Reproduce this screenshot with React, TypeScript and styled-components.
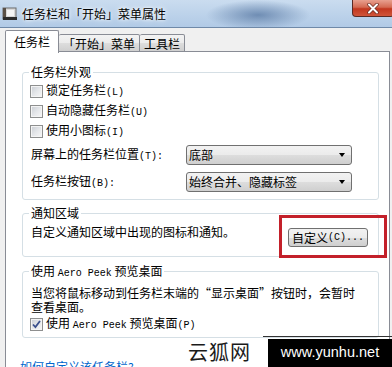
import styled, { createGlobalStyle } from 'styled-components';

const GlobalStyle = createGlobalStyle`
  html, body {
    margin: 0;
    padding: 0;
  }
  body {
    background: #f0f0f0;
    font-family: "Noto Sans CJK SC", "Noto Sans", sans-serif;
    font-size: 12px;
    color: #000;
    overflow: hidden;
  }
`;

const Window = styled.div`
  position: relative;
  width: 392px;
  height: 367px;
  overflow: hidden;
  display: flex;
  flex-direction: column;
  background: #f0f0f0;
`;

const TitleBar = styled.div`
  height: 27px;
  flex-shrink: 0;
  display: flex;
  align-items: center;
  padding-left: 2px;
  border-bottom: 1px solid #6f89a8;
  background:
    radial-gradient(ellipse 52px 15px at 258px 15px, rgba(92, 124, 166, 0.8), rgba(92, 124, 166, 0) 100%),
    linear-gradient(180deg, #cadcef 0%, #bcd2ea 55%, #b1cae6 100%);
`;

const TitleText = styled.span`
  margin-left: 4px;
  font-size: 12px;
  line-height: 14px;
  color: #000;
  text-shadow: 0 0 6px #fff, 0 0 3px #fff;
`;

const CloseButton = styled.div`
  margin-left: auto;
  align-self: flex-start;
  width: 42px;
  height: 17px;
  margin-right: -2px;
  display: flex;
  align-items: center;
  justify-content: center;
  border: 1px solid #5b2a24;
  border-top: none;
  border-radius: 0 0 4px 4px;
  background: linear-gradient(180deg, #e8a08f 0%, #d46a53 45%, #c2371f 55%, #d0553a 100%);
  box-sizing: border-box;
`;

const Body = styled.div`
  flex: 1;
  display: flex;
  flex-direction: column;
  padding: 2px 2px 0 5px;
  min-height: 0;
`;

const TabStrip = styled.div`
  display: flex;
  align-items: flex-end;
  height: 22px;
  position: relative;
  z-index: 1;
`;

const Tab = styled.div<{ $active?: boolean }>`
  height: ${p => (p.$active ? 23 : 18)}px;
  margin-bottom: ${p => (p.$active ? -1 : 0)}px;
  padding: 0 ${p => (p.$active ? 8 : 4)}px;
  display: flex;
  align-items: center;
  box-sizing: border-box;
  border: 1px solid #898c95;
  border-bottom: ${p => (p.$active ? 'none' : '1px solid #898c95')};
  border-left: ${p => (p.$active ? '1px solid #898c95' : 'none')};
  background: ${p => (p.$active ? '#fff' : 'linear-gradient(180deg, #f3f3f3 0%, #ebebeb 50%, #dddddd 51%, #cfcfcf 100%)')};
  border-radius: 2px 2px 0 0;
  font-size: 12px;
  line-height: 14px;
  padding-top: ${p => (p.$active ? 0 : 1)}px;
`;

const Panel = styled.div`
  flex: 1;
  background: #fff;
  border: 1px solid #898c95;
  border-bottom: none;
  margin-top: -1px;
  padding: 20px 10px 0 16px;
  display: flex;
  flex-direction: column;
`;

const Group = styled.div<{ $gap?: number; $bottom: number }>`
  margin-top: ${p => p.$gap ?? 0}px;
  border: 1px solid #d5dfe5;
  border-radius: 3px;
  padding: 0 10px ${p => p.$bottom}px 8px;
  display: flex;
  flex-direction: column;
`;

const GroupTitle = styled.div`
  margin: -8px 0 0 -2px;
  padding: 0 2px;
  width: fit-content;
  background: #fff;
  line-height: 14px;
`;

const Latin = styled.span`
  font-family: "Liberation Mono", "DejaVu Sans Mono", monospace;
  font-size: 10px;
`;

const CheckRow = styled.label<{ $gap?: number }>`
  height: 20px;
  margin-top: ${p => p.$gap ?? 0}px;
  display: flex;
  align-items: center;
  gap: 3px;
  line-height: 14px;
  margin-left: -1px;
`;

const Box = styled.span`
  width: 13px;
  height: 13px;
  box-sizing: border-box;
  border: 1px solid #8e8f8f;
  background: linear-gradient(135deg, #c9cdd3 0%, #e4e6e9 50%, #f7f7f7 100%);
  box-shadow: inset 0 0 0 1px #f4f4f4;
  display: flex;
  align-items: center;
  justify-content: center;
`;

const SelectRow = styled.div<{ $gap: number }>`
  margin-top: ${p => p.$gap}px;
  display: grid;
  grid-template-columns: 155px 166px;
  align-items: center;
  line-height: 14px;
`;

const Select = styled.div`
  height: 20px;
  box-sizing: border-box;
  border: 1px solid #707070;
  border-radius: 3px;
  background: linear-gradient(180deg, #f2f2f2 0%, #ebebeb 50%, #dddddd 51%, #cfcfcf 100%);
  display: flex;
  align-items: center;
  justify-content: space-between;
  padding: 0 6px 0 2px;
  line-height: 14px;
`;

const Arrow = styled.span`
  width: 0;
  height: 0;
  border-left: 3.5px solid transparent;
  border-right: 3.5px solid transparent;
  border-top: 4px solid #000;
`;

const NotifyRow = styled.div`
  margin-top: 5px;
  display: flex;
  justify-content: space-between;
  align-items: flex-start;
  line-height: 14px;
`;

const ButtonWrap = styled.div`
  position: relative;
  margin-top: 3px;
`;

const Button = styled.div`
  width: 80px;
  height: 19px;
  box-sizing: border-box;
  border: 1px solid #707070;
  border-radius: 3px;
  background: linear-gradient(180deg, #f2f2f2 0%, #ebebeb 50%, #dddddd 51%, #cfcfcf 100%);
  display: flex;
  align-items: center;
  justify-content: center;
  line-height: 14px;
`;

const Highlight = styled.div`
  position: absolute;
  left: -9px;
  top: -13px;
  width: 108px;
  height: 43px;
  box-sizing: border-box;
  border: 3px solid #c3202a;
  pointer-events: none;
`;

const Paragraph = styled.div`
  margin-top: 5px;
  line-height: 14px;
`;

const HelpLink = styled.a`
  margin: 22px 0 0 -2px;
  color: #0066cc;
  line-height: 14px;
  text-decoration: none;
`;

const Watermark = styled.div`
  position: absolute;
  right: 0;
  bottom: 0;
  display: flex;
  align-items: flex-end;
`;

const Brand = styled.div`
  font-size: 20px;
  line-height: 24px;
  color: #1a1a1a;
  letter-spacing: 1px;
  margin: 0 12px 3px 0;
`;

const UrlFrame = styled.div`
  border-top: 1px solid #333;
  padding: 2px 0 0 5px;
`;

const UrlBox = styled.div`
  width: 124px;
  height: 28px;
  background: #000;
  color: #fff;
  font-family: "Liberation Sans", Arial, sans-serif;
  font-size: 14.5px;
  display: flex;
  align-items: center;
  justify-content: center;
  padding-bottom: 2px;
  box-sizing: border-box;
`;

const AppIcon = () => (
  <svg width="16" height="16" viewBox="0 0 16 16">
    <rect x="1" y="2" width="13" height="11" fill="#d8d8d8" stroke="#6b6b6b" />
    <rect x="1" y="2" width="3" height="11" fill="#5a5046" />
    <rect x="5" y="4" width="7" height="6" fill="#f4f4f4" />
    <rect x="1" y="11" width="14" height="3" fill="#2b2b2b" />
  </svg>
);

const CloseGlyph = () => (
  <svg width="12" height="11" viewBox="0 0 12 11">
    <path d="M2 1.5 L10 9.5 M10 1.5 L2 9.5" stroke="#6a2a20" strokeWidth="3.4" strokeLinecap="round" />
    <path d="M2 1.5 L10 9.5 M10 1.5 L2 9.5" stroke="#fff" strokeWidth="2" strokeLinecap="round" />
  </svg>
);

const Check = () => (
  <svg width="9" height="9" viewBox="0 0 9 9">
    <path d="M1 4.5 L3.4 7 L8 1" fill="none" stroke="#3a4f8c" strokeWidth="1.8" />
  </svg>
);

const CheckBox = ({ checked, children, gap }: { checked?: boolean; children: React.ReactNode; gap?: number }) => (
  <CheckRow $gap={gap}>
    <Box>{checked && <Check />}</Box>
    <span>{children}</span>
  </CheckRow>
);

export default function App() {
  return (
    <>
      <GlobalStyle />
      <Window>
        <TitleBar>
          <AppIcon />
          <TitleText>任务栏和「开始」菜单属性</TitleText>
          <CloseButton>
            <CloseGlyph />
          </CloseButton>
        </TitleBar>
        <Body>
          <TabStrip>
            <Tab $active>任务栏</Tab>
            <Tab>「开始」菜单</Tab>
            <Tab>工具栏</Tab>
          </TabStrip>
          <Panel>
            <Group $bottom={7}>
              <GroupTitle>任务栏外观</GroupTitle>
              <CheckBox gap={2}>锁定任务栏<Latin>(L)</Latin></CheckBox>
              <CheckBox>自动隐藏任务栏<Latin>(U)</Latin></CheckBox>
              <CheckBox>使用小图标<Latin>(I)</Latin></CheckBox>
              <SelectRow $gap={4}>
                <span>屏幕上的任务栏位置<Latin>(T):</Latin></span>
                <Select>
                  <span>底部</span>
                  <Arrow />
                </Select>
              </SelectRow>
              <SelectRow $gap={7}>
                <span>任务栏按钮<Latin>(B):</Latin></span>
                <Select>
                  <span>始终合并、隐藏标签</span>
                  <Arrow />
                </Select>
              </SelectRow>
            </Group>
            <Group $gap={13} $bottom={9}>
              <GroupTitle>通知区域</GroupTitle>
              <NotifyRow>
                <span>自定义通知区域中出现的图标和通知。</span>
                <ButtonWrap>
                  <Button>自定义<Latin>(C)...</Latin></Button>
                  <Highlight />
                </ButtonWrap>
              </NotifyRow>
            </Group>
            <Group $gap={14} $bottom={3}>
              <GroupTitle>使用 <Latin>Aero Peek</Latin> 预览桌面</GroupTitle>
              <Paragraph>
                当您将鼠标移动到任务栏末端的“显示桌面”按钮时，会暂时
                <br />
                查看桌面。
              </Paragraph>
              <CheckBox checked>使用 <Latin>Aero Peek</Latin> 预览桌面<Latin>(P)</Latin></CheckBox>
            </Group>
            <HelpLink href="#">如何自定义该任务栏?</HelpLink>
          </Panel>
        </Body>
        <Watermark>
          <Brand>云狐网</Brand>
          <UrlFrame>
            <UrlBox>www.yunhu.net</UrlBox>
          </UrlFrame>
        </Watermark>
      </Window>
    </>
  );
}
